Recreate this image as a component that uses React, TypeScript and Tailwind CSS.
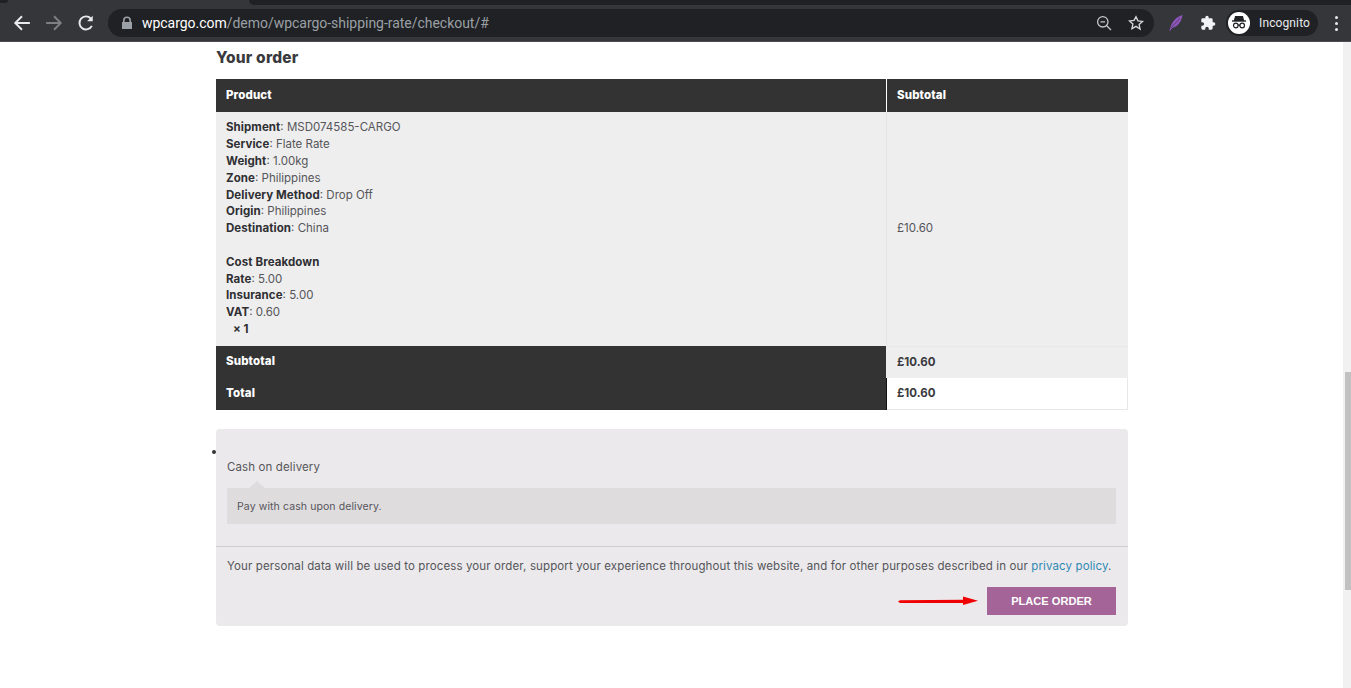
import React from "react";

const F = "font-['Inter','Noto_Sans',sans-serif]";

function Row({ k, v }: { k: string; v: string }) {
  return (
    <div className="h-[16.8px] leading-[16.8px] whitespace-nowrap tracking-normal">
      <b className="font-bold text-[#2f2f33] tracking-[0.07px]">{k}</b>: {v}
    </div>
  );
}

function Chrome() {
  return (
    <header className="h-[42px] shrink-0 bg-[#35363a] relative border-b border-[#4c4d50]">
      <div className="absolute right-0 top-0 h-[5px] w-[1102px] bg-[#202124] rounded-bl-[6px]" />
      <div className="absolute left-0 top-0 h-[3px] w-[8px] bg-[#202124] rounded-br-[6px]" />
      <div className="h-full flex items-center pt-[5px]">
        <svg width="18" height="18" viewBox="0 0 16 16" className="ml-[13px]" fill="none" stroke="#e8eaed" strokeWidth="1.7">
          <path d="M15 8H2M8 2 2 8l6 6" />
        </svg>
        <svg width="18" height="18" viewBox="0 0 16 16" className="ml-[14px]" fill="none" stroke="#7e8084" strokeWidth="1.7">
          <path d="M1 8h13M8 2l6 6-6 6" />
        </svg>
        <svg width="18" height="18" viewBox="0 0 16 16" className="ml-[14px]" fill="none" stroke="#e8eaed" strokeWidth="1.7">
          <path d="M13.2 10.5A5.8 5.8 0 1 1 12.3 4" />
          <path d="M14 1.5v5H9z" fill="#e8eaed" stroke="none" />
        </svg>
        <div className="ml-[13px] h-[28px] w-[1046px] rounded-full bg-[#202124] flex items-center">
          <svg width="12" height="14" viewBox="0 0 12 14" className="ml-[13px]" fill="#9aa0a6">
            <path d="M2 6V4.4a4 4 0 0 1 8 0V6h1v7H1V6zm1.600 0h4.800V4.400a2.400 2.400 0 0 0-4.800 0z" />
          </svg>
          <div className="ml-[9px] text-[14px] tracking-[-0.03px] text-[#9aa0a6] font-['Roboto',sans-serif] whitespace-nowrap">
            <span className="text-white">wpcargo.com</span>/demo/wpcargo-shipping-rate/checkout/#
          </div>
          <div className="flex-1" />
          <svg width="16" height="16" viewBox="0 0 16 16" fill="none" stroke="#c4c7c5" strokeWidth="1.3" className="mr-[16px]">
            <circle cx="6.800" cy="6.800" r="5.200" />
            <path d="M4.500 6.800h4.600M10.700 10.700 15 15" />
          </svg>
          <svg width="16" height="16" viewBox="0 0 24 24" fill="none" stroke="#d6d8da" strokeWidth="2" className="mr-[10px]">
            <path d="M12 2.500l2.900 6.300 6.900.8-5.100 4.700 1.400 6.800L12 17l-6.100 3.400 1.400-6.800L2.200 8.900l6.900-.8z" />
          </svg>
        </div>
        <svg width="16" height="18" viewBox="0 0 16 18" className="ml-[14px]" fill="#8e55bd">
          <path d="M14.500 1C9 2.500 3.500 7 1.500 16.500c-.1.700.6.800.8.200C3 15 4 14 5.500 13.500c5-1.700 8-6.500 9-12.500z" />
          <path d="M3 14 12 4" stroke="#35363a" strokeWidth="0.6" fill="none" />
        </svg>
        <svg width="16" height="16" viewBox="0 0 24 24" className="ml-[16px]" fill="#f1f3f4">
          <path d="M20.500 11H19V7a2 2 0 0 0-2-2h-4V3.500a2.500 2.500 0 0 0-5 0V5H4a2 2 0 0 0-2 2v3.800h1.500a2.700 2.700 0 0 1 0 5.400H2V20a2 2 0 0 0 2 2h3.800v-1.500a2.700 2.700 0 0 1 5.400 0V22H17a2 2 0 0 0 2-2v-4h1.500a2.500 2.500 0 0 0 0-5z" />
        </svg>
        <div className="ml-[10px] h-[26px] w-[92px] rounded-full bg-[#202124] flex items-center">
          <div className="w-[22px] h-[22px] ml-[2px] rounded-full bg-white flex items-center justify-center">
            <svg width="18" height="16" viewBox="0 0 18 16" fill="none" stroke="#202124" strokeWidth="1.200">
              <path d="M5.500 1.500h7l1 4h-9z" fill="#202124" />
              <path d="M2 6h14" strokeWidth="1.400" />
              <circle cx="5.800" cy="10.500" r="2.300" />
              <circle cx="12.200" cy="10.500" r="2.300" />
              <path d="M8 10.200h2" />
            </svg>
          </div>
          <span className="ml-[9px] text-[12px] text-[#e8eaed] font-['Roboto',sans-serif]">Incognito</span>
        </div>
        <div className="ml-[17px] flex flex-col gap-[3px]">
          <span className="block w-[3px] h-[3px] rounded-full bg-[#e8eaed]" />
          <span className="block w-[3px] h-[3px] rounded-full bg-[#e8eaed]" />
          <span className="block w-[3px] h-[3px] rounded-full bg-[#e8eaed]" />
        </div>
      </div>
    </header>
  );
}

function Scrollbar() {
  return (
    <div className="w-[8px] shrink-0 bg-[#f1f1f1] flex flex-col">
      <div className="h-[330px] shrink-0" />
      <div className="h-[218px] shrink-0 bg-[#c1c1c1] ml-[2px]" />
    </div>
  );
}

export default function App() {
  return (
    <div className={`w-[1351px] h-[688px] overflow-hidden bg-white flex flex-col ${F} text-[11.500px] text-[#55555a] tracking-[0.12px]`}>
      <Chrome />
      <div className="flex-1 flex min-h-0">
        <main className="flex-1 pl-[216px] min-w-0">
          <div className="w-[912px]">
            <h3 className="mt-[6px] h-[20px] leading-[20px] text-[15.500px] font-extrabold tracking-[0.2px] text-[#3a3a3e]">Your order</h3>
            <div className="mt-[11px]">
              <div className="flex h-[33px] bg-[#333333] text-white font-extrabold items-center">
                <div className="w-[671px] pl-[10px] h-full flex items-center border-r border-white">Product</div>
                <div className="pl-[10px]">Subtotal</div>
              </div>
              <div className="flex h-[234px] bg-[#eeeeee]">
                <div className="w-[671px] pl-[10px] pt-[7.350px] border-r border-[#e4e4e4]">
                  <Row k="Shipment" v="MSD074585-CARGO" />
                  <Row k="Service" v="Flate Rate" />
                  <Row k="Weight" v="1.00kg" />
                  <Row k="Zone" v="Philippines" />
                  <Row k="Delivery Method" v="Drop Off" />
                  <Row k="Origin" v="Philippines" />
                  <Row k="Destination" v="China" />
                  <div className="h-[16.800px]" />
                  <div className="h-[16.800px] leading-[16.800px] font-bold text-[#2f2f33] tracking-[0.1px]">Cost Breakdown</div>
                  <Row k="Rate" v="5.00" />
                  <Row k="Insurance" v="5.00" />
                  <Row k="VAT" v="0.60" />
                  <div className="h-[16.800px] leading-[16.800px] pl-[7px] font-bold text-[#2f2f33] tracking-normal">× 1</div>
                </div>
                <div className="pl-[10px] flex items-center tracking-normal">£10.60</div>
              </div>
              <div className="flex h-[32px] items-stretch">
                <div className="w-[670px] bg-[#333333] text-white font-extrabold pl-[10px] flex items-center">Subtotal</div>
                <div className="flex-1 bg-[#eeeeee] pl-[11px] flex items-center border-t border-[#e8e8e8] text-[#3a3a3e] font-bold tracking-normal">£10.60</div>
              </div>
              <div className="flex h-[32px] items-stretch">
                <div className="w-[671px] bg-[#333333] text-white font-extrabold pl-[10px] flex items-center border-r border-[#111]">Total</div>
                <div className="flex-1 bg-white pl-[10px] flex items-center border-r border-b border-[#e8e8e8] text-[#3a3a3e] font-bold tracking-normal">£10.60</div>
              </div>
            </div>
            <section className="mt-[19px] h-[197px] bg-[#ebe9eb] rounded-[4px] relative">
              <span className="absolute left-[-4px] top-[21px] w-[4px] h-[4px] rounded-full bg-[#333]" />
              <div className="pl-[11px] pt-[31px] h-[46px] leading-[15px]">Cash on delivery</div>
              <div className="ml-[11px] mr-[12px] mt-[13px] h-[36px] bg-[#dfdcde] relative flex items-center pl-[10px] pt-[2px] text-[10.500px] tracking-[0.1px] rounded-[1px]">
                <span className="absolute left-[22px] top-[-7px] w-0 h-0 border-l-[8px] border-r-[8px] border-b-[7px] border-l-transparent border-r-transparent border-b-[#dfdcde]" />
                Pay with cash upon delivery.
              </div>
              <div className="mt-[22px] border-t border-[#cfcdd0] pl-[11px] pt-[12px] leading-[15px] whitespace-nowrap">
                Your personal data will be used to process your order, support your experience throughout this website, and for other purposes described in our <span className="text-[#2f89b5]">privacy policy</span>.
              </div>
              <div className="mt-[13px] mr-[12px] flex justify-end items-center">
                <svg width="82" height="12" viewBox="0 0 82 12" className="mr-[7px]">
                  <path d="M0 6.500 2 5.200 65 4.800V1.500L80 5.800 65 10V8.100L2 8z" fill="#f00000" />
                </svg>
                <button className="w-[129px] h-[28px] bg-[#a46497] text-white text-[11.100px] font-['Liberation_Sans',sans-serif] font-bold tracking-normal">PLACE ORDER</button>
              </div>
            </section>
          </div>
        </main>
        <Scrollbar />
      </div>
    </div>
  );
}
